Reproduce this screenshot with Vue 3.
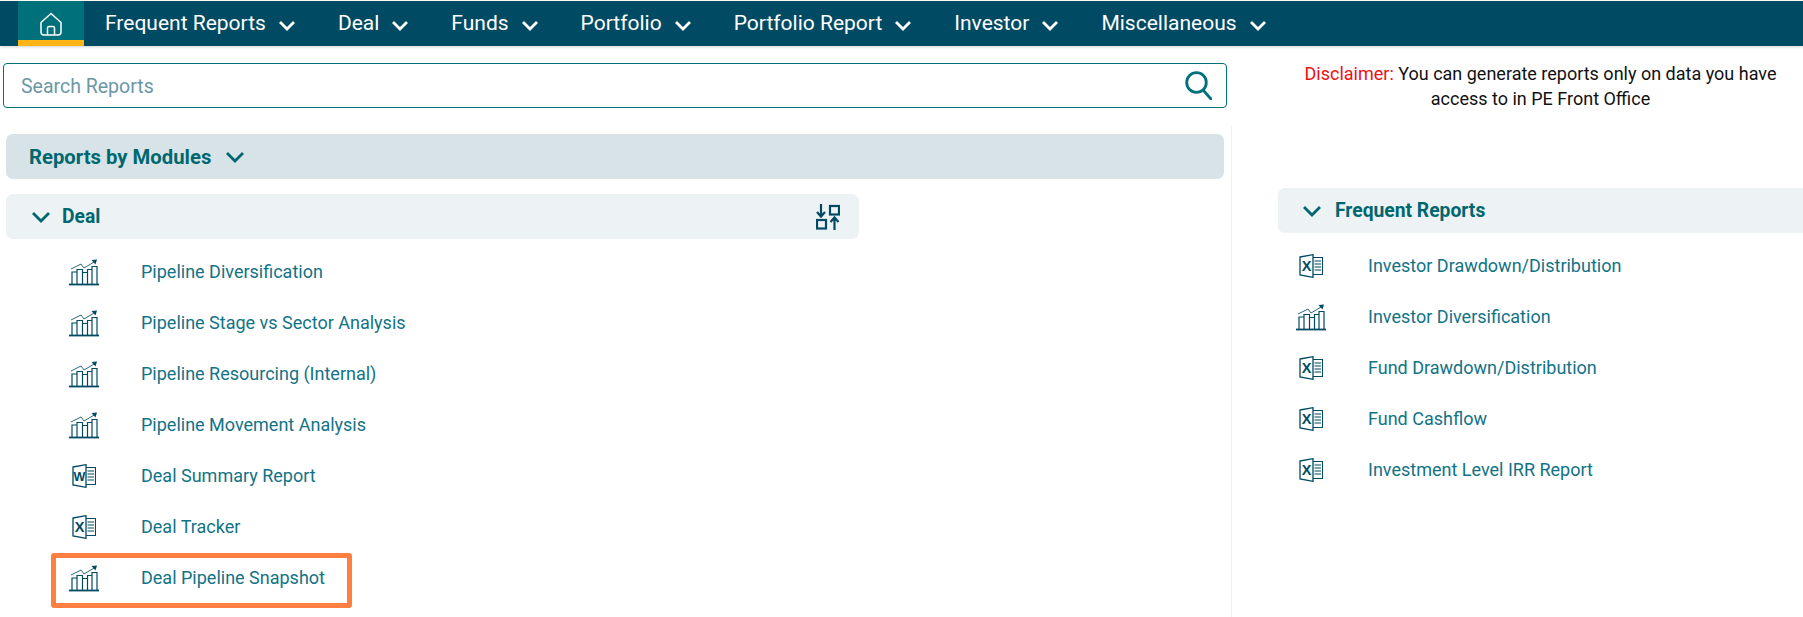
<script setup>
const navItems = ['Frequent Reports', 'Deal', 'Funds', 'Portfolio', 'Portfolio Report', 'Investor', 'Miscellaneous']

const dealReports = [
  { name: 'Pipeline Diversification', icon: 'chart' },
  { name: 'Pipeline Stage vs Sector Analysis', icon: 'chart' },
  { name: 'Pipeline Resourcing (Internal)', icon: 'chart' },
  { name: 'Pipeline Movement Analysis', icon: 'chart' },
  { name: 'Deal Summary Report', icon: 'word' },
  { name: 'Deal Tracker', icon: 'excel' },
  { name: 'Deal Pipeline Snapshot', icon: 'chart', marked: true }
]

const frequentReports = [
  { name: 'Investor Drawdown/Distribution', icon: 'excel' },
  { name: 'Investor Diversification', icon: 'chart' },
  { name: 'Fund Drawdown/Distribution', icon: 'excel' },
  { name: 'Fund Cashflow', icon: 'excel' },
  { name: 'Investment Level IRR Report', icon: 'excel' }
]
</script>

<template>
  <div class="page">
    <nav class="topnav">
      <a class="home">
        <svg width="22" height="24" viewBox="0 0 22 24" fill="none" stroke="#fff" stroke-width="1.500" stroke-linejoin="round">
          <path d="M1 10.500 11 1.500 21 10.500V20a3 3 0 0 1-3 3H4a3 3 0 0 1-3-3Z" />
          <path d="M7.500 23V16a1.500 1.500 0 0 1 1.500-1.500h4A1.500 1.500 0 0 1 14.500 16V23" />
        </svg>
      </a>
      <a v-for="item in navItems" :key="item" class="nav-item">
        {{ item }}
        <svg class="nav-chevron" width="18" height="11" viewBox="0 0 18 11" fill="none" stroke="#fff" stroke-width="2.800">
          <path d="M2 2 9 9 16 2" />
        </svg>
      </a>
    </nav>

    <div class="columns">
      <section class="left">
        <div class="search">
          <span class="placeholder">Search Reports</span>
          <svg width="27" height="29" viewBox="0 0 27 29" fill="none" stroke="#00707a" stroke-width="2.800">
            <circle cx="11.500" cy="11.500" r="9.800" />
            <path d="M18.500 19.500 26 28" stroke-linecap="round" />
          </svg>
        </div>

        <div class="modules-bar">
          <span>Reports by Modules</span>
          <svg width="20" height="12" viewBox="0 0 20 12" fill="none" stroke="#00676f" stroke-width="2.800">
            <path d="M2 2 10 10 18 2" />
          </svg>
        </div>

        <div class="group-bar deal-bar">
          <svg width="20" height="12" viewBox="0 0 20 12" fill="none" stroke="#00676f" stroke-width="2.800">
            <path d="M2 2 10 10 18 2" />
          </svg>
          <span class="group-title">Deal</span>
          <svg class="sort-icon" width="24" height="26" viewBox="0 0 24 26" fill="none" stroke="#004b63" stroke-width="2.200">
            <path d="M5 0V12M1 8 5 12.500 9 8" />
            <rect x="14" y="2" width="9" height="8.500" />
            <rect x="1" y="16" width="9" height="8.500" />
            <path d="M18.500 26V14M14.500 18 18.500 13.500 22.500 18" />
          </svg>
        </div>

        <ul class="report-list deal-list">
          <li v-for="report in dealReports" :key="report.name" class="report" :class="{ marked: report.marked }">
            <span class="icon-cell">
              <svg v-if="report.icon === 'chart'" width="30" height="28" viewBox="0 0 30 28" fill="none" stroke="#004b63" stroke-width="1.200">
                <path d="M3 26V14H8V26M8 26V11.500H13.500V26M13.500 26V14.500H18.500V26M18.500 26V11.500H23V26M23 26V8.500H28V26" />
                <path d="M2 11 12 6 15 10 26 3.500" stroke-width="1" stroke="#2a6a80" />
                <path d="M22.500 2 28 1.500 26.500 6.500Z" fill="#004b63" stroke="none" />
                <path d="M0 26.500H30" stroke-width="1.800" />
              </svg>
              <svg v-else width="24" height="24" viewBox="0 0 24 24" fill="none" stroke="#004b63" stroke-width="1.100">
                <path d="M1 3 14 .7V23.300L1 21Z" stroke-width="1.300" />
                <path d="M14 3.500H23.500V20.500H14" />
                <path d="M15.500 7H22M15.500 10H22M15.500 13H22M15.500 16H22" />
                <text x="7.500" y="17" :class="report.icon === 'word' ? 'file-letter small' : 'file-letter'" text-anchor="middle">{{ report.icon === 'word' ? 'W' : 'X' }}</text>
              </svg>
            </span>
            <span>{{ report.name }}</span>
          </li>
        </ul>
      </section>

      <section class="right">
        <p class="disclaimer">
          <span class="red">Disclaimer:</span> You can generate reports only on data you have<br />access to in PE Front Office
        </p>

        <div class="group-bar frequent-bar">
          <svg width="20" height="12" viewBox="0 0 20 12" fill="none" stroke="#00676f" stroke-width="2.800">
            <path d="M2 2 10 10 18 2" />
          </svg>
          <span class="group-title">Frequent Reports</span>
        </div>

        <ul class="report-list frequent-list">
          <li v-for="report in frequentReports" :key="report.name" class="report">
            <span class="icon-cell">
              <svg v-if="report.icon === 'chart'" width="30" height="28" viewBox="0 0 30 28" fill="none" stroke="#004b63" stroke-width="1.200">
                <path d="M3 26V14H8V26M8 26V11.500H13.500V26M13.500 26V14.500H18.500V26M18.500 26V11.500H23V26M23 26V8.500H28V26" />
                <path d="M2 11 12 6 15 10 26 3.500" stroke-width="1" stroke="#2a6a80" />
                <path d="M22.500 2 28 1.500 26.500 6.500Z" fill="#004b63" stroke="none" />
                <path d="M0 26.500H30" stroke-width="1.800" />
              </svg>
              <svg v-else width="24" height="24" viewBox="0 0 24 24" fill="none" stroke="#004b63" stroke-width="1.100">
                <path d="M1 3 14 .7V23.300L1 21Z" stroke-width="1.300" />
                <path d="M14 3.500H23.500V20.500H14" />
                <path d="M15.500 7H22M15.500 10H22M15.500 13H22M15.500 16H22" />
                <text x="7.500" y="17" class="file-letter" text-anchor="middle">X</text>
              </svg>
            </span>
            <span>{{ report.name }}</span>
          </li>
        </ul>
      </section>
    </div>
  </div>
</template>

<style>
html,
body {
  margin: 0;
  background: #fff;
  overflow: hidden;
}
</style>

<style scoped>
.page {
  width: 1803px;
  height: 617px;
  overflow: hidden;
  padding-top: 1px;
  box-sizing: border-box;
  font-family: Roboto, "Liberation Sans", sans-serif;
}

.topnav {
  display: flex;
  align-items: center;
  height: 45px;
  background: #004b63;
  padding-left: 18px;
  box-shadow: 0 1px 3px rgba(0, 0, 0, 0.18);
}

.home {
  display: flex;
  align-items: center;
  justify-content: center;
  width: 66px;
  height: 45px;
  box-sizing: border-box;
  background: #00707a;
  border-bottom: 6px solid #fdb515;
  padding-top: 6px;
  margin-right: 21px;
}

.nav-item {
  display: flex;
  align-items: center;
  color: #fff;
  font-size: 21px;
  margin-right: 42px;
  margin-top: -1px;
}

.nav-chevron {
  margin-left: 12px;
  margin-top: 5px;
}

.columns {
  display: flex;
}

.left {
  width: 1232px;
  height: 571px;
  flex-shrink: 0;
  box-sizing: border-box;
  position: relative;
}

.left::after {
  content: '';
  position: absolute;
  right: 0;
  top: 80px;
  bottom: 0;
  border-right: 1px solid #eef1f3;
}

.search {
  display: flex;
  align-items: center;
  justify-content: space-between;
  box-sizing: border-box;
  width: 1224px;
  height: 45px;
  margin: 17px 0 0 3px;
  padding: 0 14px 0 17px;
  border: 1px solid #00707a;
  border-radius: 4px;
}

.placeholder {
  color: #6b97a5;
  font-size: 19.500px;
  margin-top: 2px;
}

.modules-bar {
  display: flex;
  align-items: center;
  gap: 14px;
  width: 1218px;
  height: 45px;
  box-sizing: border-box;
  margin: 26px 0 0 6px;
  padding-left: 23px;
  background: #d8e3e8;
  border-radius: 7px;
  color: #00676f;
  font-size: 20.300px;
  font-weight: 700;
}

.group-bar {
  display: flex;
  align-items: center;
  height: 45px;
  box-sizing: border-box;
  background: #edf2f5;
  border-radius: 7px;
  color: #00676f;
}

.deal-bar {
  width: 853px;
  margin: 15px 0 0 6px;
  padding-left: 25px;
}

.frequent-bar {
  margin: 77px 0 0 46px;
  padding-left: 24px;
  border-radius: 7px 0 0 7px;
}

.group-title {
  font-size: 19.300px;
  font-weight: 700;
  margin-left: 11px;
}

.frequent-bar .group-title {
  margin-left: 13px;
}

.sort-icon {
  margin-left: auto;
  margin-right: 19px;
}

.report-list {
  list-style: none;
  margin: 0;
  padding: 0;
}

.deal-list {
  margin-top: 7px;
  padding-left: 69px;
}

.frequent-list {
  margin-top: 7px;
  padding-left: 64px;
}

.report {
  display: flex;
  align-items: center;
  height: 51px;
  color: #127386;
  font-size: 18px;
  position: relative;
}

.icon-cell {
  display: flex;
  justify-content: center;
  width: 30px;
  margin-right: 42px;
}

.report.marked::before {
  content: '';
  position: absolute;
  left: -18px;
  top: 1px;
  width: 301px;
  height: 55px;
  box-sizing: border-box;
  border: 5px solid #ff7f41;
  border-radius: 3px;
}

.file-letter {
  font-family: "Liberation Sans", sans-serif;
  font-size: 14.500px;
  font-weight: 700;
  fill: #004b63;
  stroke: none;
}

.file-letter.small {
  font-size: 12.500px;
}

.right {
  flex: 1;
}

.disclaimer {
  margin: 15px 0 0;
  padding-left: 46px;
  font-size: 18px;
  line-height: 25px;
  text-align: center;
  color: #111;
}

.red {
  color: #f01010;
}
</style>
